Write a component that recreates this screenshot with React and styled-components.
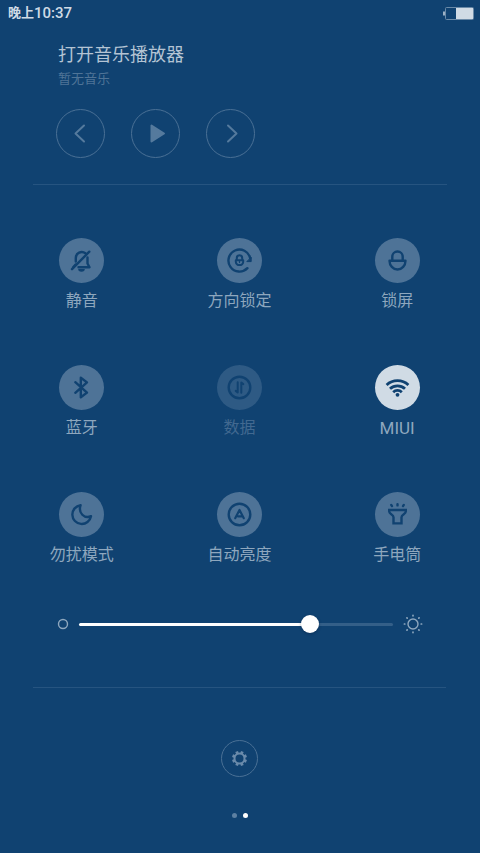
import React, { useState } from "react";
import styled, { createGlobalStyle } from "styled-components";

const navy = "#104271";
const muted = "#4e7397";

const GlobalStyle = createGlobalStyle`
  * { box-sizing: border-box; }
  body {
    margin: 0;
    background: ${navy};
    font-family: Roboto, "Noto Sans CJK SC", sans-serif;
  }
  button {
    font: inherit;
    color: inherit;
    background: none;
    border: 0;
    padding: 0;
    cursor: pointer;
  }
  svg { display: block; }
`;

const Screen = styled.main`
  display: flex;
  flex-direction: column;
  min-height: 100vh;
`;

const StatusBar = styled.header`
  display: flex;
  align-items: center;
  justify-content: space-between;
  height: 26px;
  padding: 0 6px 0 8px;
  color: #cfdae5;
`;

const Clock = styled.time`
  display: flex;
  align-items: center;
  font-size: 15px;
  line-height: 26px;
  font-weight: 500;
`;

const Period = styled.span`
  font-size: 13px;
  font-weight: 700;
`;

const Player = styled.section`
  display: flex;
  flex-direction: column;
  margin: 0 33px;
  padding: 16px 23px 26px;
  border-bottom: 1px solid #265480;
`;

const PlayerTitle = styled.h1`
  margin: 0 2px;
  font-size: 18px;
  line-height: 26px;
  font-weight: 400;
  color: #b4c4d4;
`;

const PlayerNote = styled.p`
  margin: 0 2px;
  font-size: 13px;
  line-height: 22px;
  color: #4f7497;
`;

const Transport = styled.div`
  display: flex;
  gap: 26px;
  margin-top: 19px;
`;

const RingButton = styled.button`
  display: grid;
  place-items: center;
  width: ${(p) => p.$size}px;
  height: ${(p) => p.$size}px;
  border: 1px solid #4a7095;
  border-radius: 50%;
  color: ${(p) => p.$ink || "#557a9d"};
`;

const Toggles = styled.section`
  display: grid;
  grid-template-columns: repeat(3, 1fr);
  grid-auto-rows: 127px;
  padding: 53px 4px 0 3px;
`;

const Toggle = styled.button`
  display: flex;
  flex-direction: column;
  align-items: center;
  gap: 6px;
  justify-self: center;
  align-self: start;
`;

const discColors = { off: muted, on: "#d0dbe5", disabled: "#2e5a84" };

const Disc = styled.span`
  width: 45px;
  height: 45px;
  border-radius: 50%;
  color: ${navy};
  background: ${(p) => discColors[p.$state]};
`;

const ToggleLabel = styled.span`
  font-size: ${(p) => (p.$latin ? 17 : 16)}px;
  line-height: 24px;
  color: ${(p) => (p.$state === "disabled" ? "#426990" : "#8ea7be")};
`;

const Brightness = styled.label`
  display: flex;
  align-items: center;
  height: 20px;
  margin: -5px 57px 0;
  gap: 10px;
  color: #8ea7be;
`;

const Range = styled.input`
  flex: 1;
  min-width: 0;
  height: 20px;
  margin: 0;
  appearance: none;
  background: transparent;

  &::-webkit-slider-runnable-track {
    height: 3px;
    border-radius: 2px;
    background: linear-gradient(
      to right,
      #fff var(--level),
      #345f88 var(--level)
    );
  }
  &::-webkit-slider-thumb {
    appearance: none;
    width: 18px;
    height: 18px;
    margin-top: -8px;
    border-radius: 50%;
    background: #fff;
    box-shadow: 0 1px 3px rgba(0, 20, 50, 0.35);
  }
`;

const Footer = styled.footer`
  display: flex;
  flex-direction: column;
  align-items: center;
  margin: 53px 34px 0 33px;
  padding-top: 52px;
  border-top: 1px solid #265480;
`;

const Pager = styled.div`
  display: flex;
  gap: 6px;
  margin-top: 36px;
`;

const PageDot = styled.button`
  && {
    width: 5px;
    height: 5px;
    border-radius: 50%;
    background: ${(p) => (p.$current ? "#fff" : "#5d80a2")};
  }
`;

const Icon = ({ size = 45, children, w = 2.4 }) => (
  <svg
    width={size}
    height={size}
    viewBox={`0 0 ${size} ${size}`}
    fill="none"
    stroke="currentColor"
    strokeWidth={w}
    strokeLinecap="round"
    strokeLinejoin="round"
    aria-hidden="true"
  >
    {children}
  </svg>
);

const MuteIcon = () => (
  <Icon>
    <path d="M16.8 23.5V20a6 6 0 0 1 9.6-4.8M28.5 19.5v6l2 3.7H19.5M16.6 26.6l-2.4 2.6" />
    <path d="M13 31.2 30.3 13.7" />
    <path d="M19.2 31h6.6a3.3 2.8 0 0 1-6.6 0z" fill="currentColor" stroke="none" />
  </Icon>
);

const RotationIcon = () => (
  <Icon>
    <path d="M30.4 30.2A11 11 0 1 1 33.2 20.2" />
    <path d="M30.2 23.6h4v-4z" fill="currentColor" strokeWidth="1" />
    <path d="M19.8 21.5V20a2.7 2.7 0 0 1 5.4 0v1.5" strokeWidth="2" />
    <path d="M18.8 22.2h7.4v1.6a3.7 3.3 0 0 1-7.4 0z" strokeWidth="2" />
    <path d="M22.5 23v1.6" strokeWidth="1.2" />
  </Icon>
);

const LockIcon = () => (
  <Icon>
    <path d="M17.3 22.5v-3.8a5.2 5.2 0 0 1 10.4 0v3.8" />
    <path d="M14.5 22.7h16a8 8.8 0 0 1-16 0z" />
  </Icon>
);

const BluetoothIcon = () => (
  <Icon>
    <path d="m16.3 17.2 11.7 10.4-6.2 4.6V12.8l6.2 4.6-11.7 10.4" />
  </Icon>
);

const DataIcon = () => (
  <Icon>
    <circle cx="22.5" cy="22.5" r="10.8" />
    <path d="M20.7 17.3v10.2l-2-1.6M24.3 27.7V17.5l2 1.6" strokeWidth="2" />
  </Icon>
);

const WifiIcon = () => (
  <Icon w={2.8}>
    <g strokeLinecap="butt">
      <path d="M11.6 20a16 16 0 0 1 21.8 0" />
      <path d="M15 23.8a11 11 0 0 1 15 0" />
      <path d="M18.2 27.2a6.2 6.2 0 0 1 8.6 0" />
    </g>
    <circle cx="22.5" cy="29.8" r="1.9" fill="currentColor" stroke="none" />
  </Icon>
);

const MoonIcon = () => (
  <Icon>
    <path d="M21.6 13.2A9.4 9.4 0 1 0 32 24.2C25.5 27.2 18.8 21 21.6 13.2z" />
  </Icon>
);

const AutoIcon = () => (
  <Icon>
    <circle cx="22.5" cy="22.5" r="10.8" />
    <path d="m18.2 26.2 4.3-8.2 4.3 8.2M21 24.4h4" strokeWidth="2.2" />
  </Icon>
);

const TorchIcon = () => (
  <Icon>
    <path
      d="M14.2 18h16.6v1.6c0 2.6-4.3 2.6-4.3 5.6v6.2h-8v-6.2c0-3-4.3-3-4.3-5.6z"
      strokeLinejoin="miter"
    />
    <path d="M22.5 12.2v1.2M16.2 12.9l.8 1.2M28.8 12.9l-.8 1.2" />
  </Icon>
);

const BatteryIcon = () => (
  <svg width="31" height="13" viewBox="0 0 31 13" role="img" aria-label="Battery">
    <path d="M0 4.5h2v4H0z" fill="#9db2c6" />
    <rect x="2.5" y="0.5" width="28" height="12" rx="1" fill="none" stroke="#6a8aa8" />
    <path d="M13 1h17v11H13z" fill="#d0dbe5" />
  </svg>
);

const turns = [0, 45, 90, 135, 180, 225, 270, 315];

const GearIcon = () => (
  <Icon size={17} w={2}>
    <circle cx="8.5" cy="8.5" r="5" />
    {turns.map((t) => (
      <path
        key={t}
        d="M8.5 3.5V1"
        strokeWidth="2.8"
        strokeLinecap="butt"
        transform={`rotate(${t + 22.5} 8.5 8.5)`}
      />
    ))}
  </Icon>
);

const SunIcon = () => (
  <Icon size={20} w={1.4}>
    <circle cx="10" cy="10" r="5" />
    {turns.map((t) => (
      <path key={t} d="M10 1.8V1.4" strokeWidth="1.7" transform={`rotate(${t} 10 10)`} />
    ))}
  </Icon>
);

const toggles = [
  { label: "静音", icon: MuteIcon, state: "off" },
  { label: "方向锁定", icon: RotationIcon, state: "off" },
  { label: "锁屏", icon: LockIcon, state: "off" },
  { label: "蓝牙", icon: BluetoothIcon, state: "off" },
  { label: "数据", icon: DataIcon, state: "disabled" },
  { label: "MIUI", icon: WifiIcon, state: "on", latin: true },
  { label: "勿扰模式", icon: MoonIcon, state: "off" },
  { label: "自动亮度", icon: AutoIcon, state: "off" },
  { label: "手电筒", icon: TorchIcon, state: "off" },
];

export default function App() {
  const [level, setLevel] = useState(75);
  return (
    <Screen>
      <GlobalStyle />
      <StatusBar>
        <Clock dateTime="22:37">
          <Period>晚上</Period>10:37
        </Clock>
        <BatteryIcon />
      </StatusBar>

      <Player>
        <PlayerTitle>打开音乐播放器</PlayerTitle>
        <PlayerNote>暂无音乐</PlayerNote>
        <Transport>
          <RingButton $size={49} aria-label="Previous">
            <Icon size={47} w={2}>
              <path d="m27 15.5-8.5 8 8.5 8" />
            </Icon>
          </RingButton>
          <RingButton $size={49} aria-label="Play">
            <Icon size={47} w={2}>
              <path d="M19.5 15.6v15.8l12.5-7.9z" fill="currentColor" />
            </Icon>
          </RingButton>
          <RingButton $size={49} aria-label="Next">
            <Icon size={47} w={2}>
              <path d="m21 15.5 8.5 8-8.5 8" />
            </Icon>
          </RingButton>
        </Transport>
      </Player>

      <Toggles>
        {toggles.map(({ label, icon: Glyph, state, latin }) => (
          <Toggle key={label} disabled={state === "disabled"} aria-pressed={state === "on"}>
            <Disc $state={state}>
              <Glyph />
            </Disc>
            <ToggleLabel $state={state} $latin={latin}>
              {label}
            </ToggleLabel>
          </Toggle>
        ))}
      </Toggles>

      <Brightness>
        <Icon size={12} w={1.4}>
          <circle cx="6" cy="6" r="4.5" />
        </Icon>
        <Range
          type="range"
          min="0"
          max="100"
          aria-label="Brightness"
          value={level}
          onChange={(e) => setLevel(Number(e.target.value))}
          style={{ "--level": `${level}%` }}
        />
        <SunIcon />
      </Brightness>

      <Footer>
        <RingButton $size={37} $ink="#6b8bab" aria-label="Settings">
          <GearIcon />
        </RingButton>
        <Pager>
          <PageDot aria-label="Page 1" />
          <PageDot $current aria-label="Page 2" />
        </Pager>
      </Footer>
    </Screen>
  );
}
